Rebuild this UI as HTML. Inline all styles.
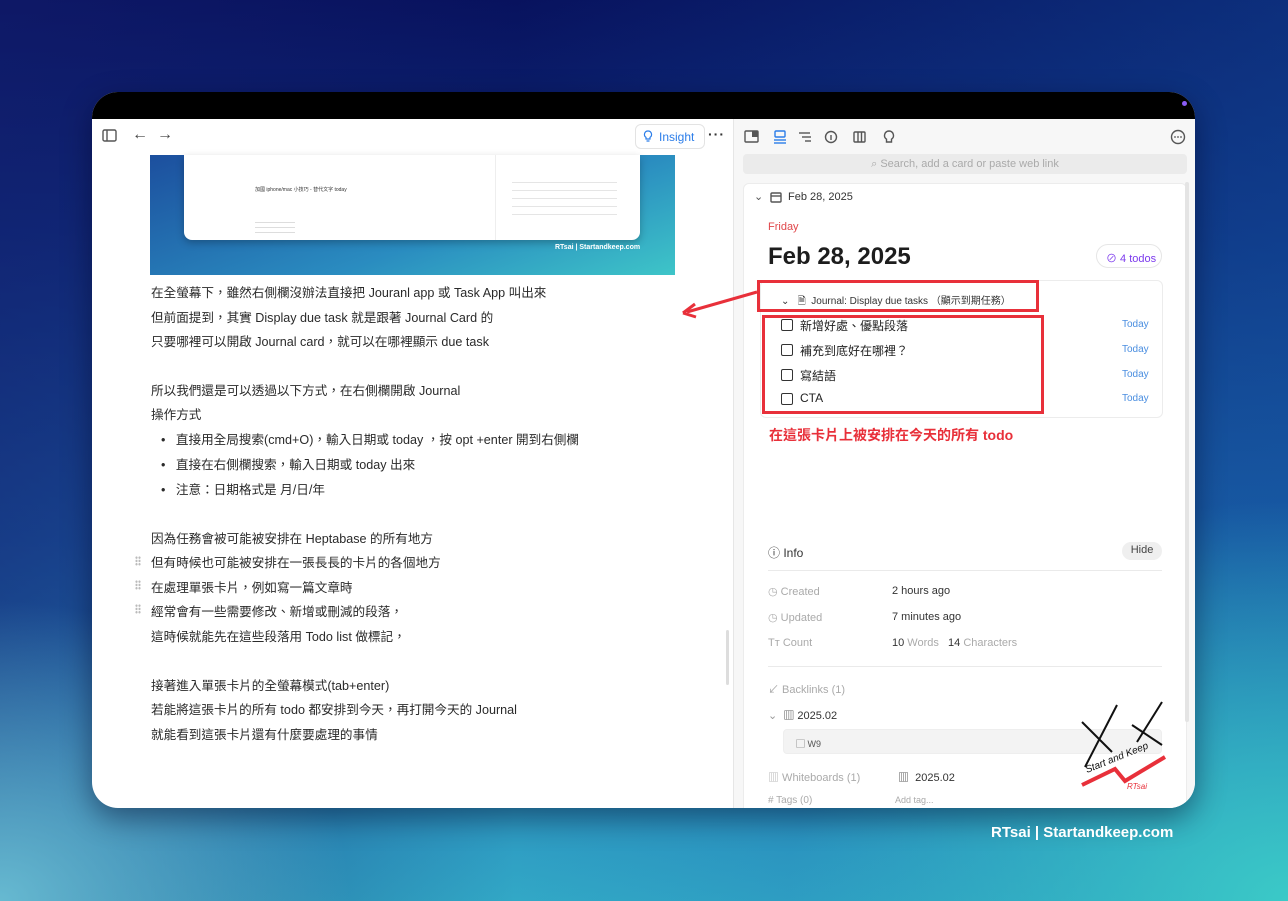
<!DOCTYPE html>
<html><head><meta charset="utf-8">
<style>
*{margin:0;padding:0;box-sizing:border-box}
body{width:1288px;height:901px;overflow:hidden;position:relative;font-family:"Liberation Sans","Noto Sans CJK TC",sans-serif;
background:
radial-gradient(ellipse 350px 300px at 0px 901px,rgba(110,195,215,.9) 0%,rgba(110,195,215,0) 100%),
radial-gradient(ellipse 500px 400px at 1288px 901px,rgba(60,205,200,.95) 0%,rgba(60,205,200,0) 100%),
linear-gradient(90deg,rgba(20,30,110,.5),rgba(0,10,90,0) 40%,rgba(20,90,170,.4) 100%),
linear-gradient(180deg,#08125e 0%,#0d2a78 25%,#1a5aa0 60%,#2a8fbf 85%,#32a8c6 100%);}
.a{position:absolute}
.win{left:92px;top:92px;width:1103px;height:716px;border-radius:26px;overflow:hidden;background:#fff;box-shadow:0 10px 30px rgba(0,0,30,.45)}
.tb{left:0;top:0;width:1103px;height:27px;background:#000}
.lt{font-size:12.6px;color:#2a2a2a;left:59px;white-space:nowrap}
.rt{white-space:nowrap}
.ic{stroke:#555;fill:none;stroke-width:1.4}
.grip{left:43px;width:6px;height:10px;background:radial-gradient(circle,#bbb 1px,transparent 1.3px) 0 0/3px 3.3px}
.cb{width:12px;height:12px;border:1.5px solid #333;border-radius:2px}
.today{font-size:10px;color:#4a8ee0}
.lbl{font-size:11px;color:#aaa}
.val{font-size:11px;color:#333}
</style></head><body>
<div class="a win">
 <div class="a tb"></div>
 <div class="a" style="right:8px;top:9px;width:5px;height:5px;border-radius:50%;background:#8b5cf6"></div>
 <svg class="a" style="left:10px;top:37px" width="16" height="14"><rect class="ic" x="1" y="1" width="13" height="11" rx="1.5"/><line class="ic" x1="5" y1="1" x2="5" y2="12"/></svg>
 <div class="a" style="left:40px;top:34px;font-size:16px;color:#444">←</div>
 <div class="a" style="left:65px;top:34px;font-size:16px;color:#444">→</div>
 <div class="a" style="left:543px;top:32px;width:70px;height:25px;border:1px solid #e3e3e3;border-radius:6px;font-size:12px;color:#2b7de9;padding:5px 0 0 23px">Insight</div>
 <svg class="a" style="left:551px;top:38px" width="10" height="13"><path d="M5 1a3.5 3.5 0 0 0-2 6.4V9h4V7.4A3.5 3.5 0 0 0 5 1zM3.5 11h3" stroke="#2b7de9" fill="none" stroke-width="1.2"/></svg>
 <div class="a" style="left:616px;top:34px;font-size:14px;color:#333;letter-spacing:1px;font-weight:bold">···</div>
 <div class="a" style="left:58px;top:63px;width:525px;height:120px;background:linear-gradient(160deg,#1c4f9e,#2a8cc0 60%,#3ec5c8)"></div>
 <div class="a" style="left:92px;top:63px;width:456px;height:85px;background:#fff;border-radius:0 0 8px 8px;box-shadow:0 3px 8px rgba(0,0,0,.25)"></div>
 <div class="a" style="left:403px;top:63px;width:1px;height:85px;background:#eee"></div>
 <div class="a" style="left:163px;top:94px;font-size:5px;color:#333">加國 iphone/mac 小技巧 - 替代文字 today</div>
 <div class="a" style="left:163px;top:130px;width:40px;height:12px;background:linear-gradient(#ddd 1px,transparent 1px) 0 0/100% 5px"></div>
 <div class="a" style="left:420px;top:90px;width:105px;height:40px;background:linear-gradient(#e5e5e5 1px,transparent 1px) 0 0/100% 8px"></div>
 <div class="a" style="left:463px;top:152px;font-size:7px;color:#fff;font-weight:bold">RTsai | Startandkeep.com</div>
 <div class="a lt" style="top:190px">在全螢幕下，雖然右側欄沒辦法直接把 Jouranl app 或 Task App 叫出來</div>
 <div class="a lt" style="top:215px">但前面提到，其實 Display due task 就是跟著 Journal Card 的</div>
 <div class="a lt" style="top:239px">只要哪裡可以開啟 Journal card，就可以在哪裡顯示 due task</div>
 <div class="a lt" style="top:288px">所以我們還是可以透過以下方式，在右側欄開啟 Journal</div>
 <div class="a lt" style="top:312px">操作方式</div>
 <div class="a lt" style="top:337px;left:69px">•&nbsp;&nbsp;&nbsp;直接用全局搜索(cmd+O)，輸入日期或 today ，按 opt +enter 開到右側欄</div>
 <div class="a lt" style="top:362px;left:69px">•&nbsp;&nbsp;&nbsp;直接在右側欄搜索，輸入日期或 today 出來</div>
 <div class="a lt" style="top:387px;left:69px">•&nbsp;&nbsp;&nbsp;注意：日期格式是 月/日/年</div>
 <div class="a lt" style="top:436px">因為任務會被可能被安排在 Heptabase 的所有地方</div>
 <div class="a lt" style="top:460px">但有時候也可能被安排在一張長長的卡片的各個地方</div>
 <div class="a lt" style="top:485px">在處理單張卡片，例如寫一篇文章時</div>
 <div class="a lt" style="top:509px">經常會有一些需要修改、新增或刪減的段落，</div>
 <div class="a lt" style="top:534px">這時候就能先在這些段落用 Todo list 做標記，</div>
 <div class="a lt" style="top:583px">接著進入單張卡片的全螢幕模式(tab+enter)</div>
 <div class="a lt" style="top:607px">若能將這張卡片的所有 todo 都安排到今天，再打開今天的 Journal</div>
 <div class="a lt" style="top:632px">就能看到這張卡片還有什麼要處理的事情</div>
 <div class="a grip" style="top:464px"></div><div class="a grip" style="top:488px"></div><div class="a grip" style="top:512px"></div>
 <div class="a" style="left:634px;top:538px;width:3px;height:55px;background:#ddd;border-radius:2px"></div>
 <div class="a" style="left:641px;top:27px;width:462px;height:689px;background:#f7f7f7;border-left:1px solid #e6e6e6"></div>
 <svg class="a" style="left:652px;top:37px" width="200" height="16">
  <rect class="ic" x="1" y="2" width="13" height="11" rx="1"/><rect x="8" y="2" width="6" height="6" fill="#555"/>
  <g stroke="#2b7de9" fill="none" stroke-width="1.4"><rect x="31" y="2" width="10" height="6" rx="1"/><line x1="30" y1="11" x2="42" y2="11"/><line x1="30" y1="14" x2="42" y2="14"/></g>
  <g class="ic"><line x1="55" y1="4" x2="66" y2="4"/><line x1="58" y1="8" x2="67" y2="8"/><line x1="61" y1="12" x2="67" y2="12"/></g>
  <circle class="ic" cx="87" cy="8" r="5.5"/><line class="ic" x1="87" y1="6" x2="87" y2="11"/>
  <rect class="ic" x="110" y="3" width="11" height="10" rx="1"/><line class="ic" x1="114" y1="3" x2="114" y2="13"/><line class="ic" x1="117.5" y1="3" x2="117.5" y2="13"/>
  <path class="ic" d="M145 2a4.5 4.5 0 0 0-2.5 8.2V13h5v-2.8A4.5 4.5 0 0 0 145 2z"/>
 </svg>
 <svg class="a" style="left:1078px;top:37px" width="16" height="16"><circle class="ic" cx="8" cy="8" r="6.5"/><circle cx="5" cy="8" r=".9" fill="#555"/><circle cx="8" cy="8" r=".9" fill="#555"/><circle cx="11" cy="8" r=".9" fill="#555"/></svg>
 <div class="a rt" style="left:651px;top:62px;width:444px;height:20px;background:#ebebeb;border-radius:4px;font-size:11px;color:#aaa;text-align:center;padding-top:4px">⌕ Search, add a card or paste web link</div>
 <div class="a" style="left:651px;top:91px;width:444px;height:640px;background:#fff;border:1px solid #ececec;border-radius:6px"></div>
 <div class="a rt" style="left:662px;top:98px;font-size:11px;color:#555">⌄</div>
 <svg class="a" style="left:678px;top:99px" width="12" height="12"><rect class="ic" x="1" y="2" width="10" height="9" rx="1"/><line class="ic" x1="1" y1="5" x2="11" y2="5"/></svg>
 <div class="a rt" style="left:696px;top:99px;font-size:11px;color:#333">Feb 28, 2025</div>
 <div class="a rt" style="left:676px;top:129px;font-size:11px;color:#e0464a">Friday</div>
 <div class="a rt" style="left:676px;top:151px;font-size:24px;font-weight:bold;color:#1d1d1d">Feb 28, 2025</div>
 <div class="a rt" style="left:1004px;top:152px;width:66px;height:24px;border:1px solid #e6e6e6;border-radius:12px;font-size:11px;color:#7c3aed;padding:5px 0 0 9px">⊘ 4 todos</div>
 <div class="a" style="left:668px;top:188px;width:403px;height:138px;border:1px solid #ececec;border-radius:6px"></div>
 <div class="a rt" style="left:689px;top:200px;font-size:10px;color:#333">⌄&nbsp;&nbsp;&nbsp;🗎&nbsp; Journal: Display due tasks （顯示到期任務）</div>
 <div class="a cb" style="left:689px;top:227px"></div><div class="a rt" style="left:708px;top:225px;font-size:12px;color:#222">新增好處、優點段落</div><div class="a today" style="left:1030px;top:227px">Today</div>
 <div class="a cb" style="left:689px;top:252px"></div><div class="a rt" style="left:708px;top:250px;font-size:12px;color:#222">補充到底好在哪裡？</div><div class="a today" style="left:1030px;top:252px">Today</div>
 <div class="a cb" style="left:689px;top:277px"></div><div class="a rt" style="left:708px;top:275px;font-size:12px;color:#222">寫結語</div><div class="a today" style="left:1030px;top:277px">Today</div>
 <div class="a cb" style="left:689px;top:301px"></div><div class="a rt" style="left:708px;top:299px;font-size:12px;color:#222">CTA</div><div class="a today" style="left:1030px;top:301px">Today</div>
 <div class="a" style="left:665px;top:188px;width:282px;height:32px;border:3px solid #e8303a"></div>
 <div class="a" style="left:670px;top:223px;width:282px;height:99px;border:3px solid #e8303a"></div>
 <div class="a rt" style="left:677px;top:333px;font-size:14px;font-weight:bold;color:#e8303a">在這張卡片上被安排在今天的所有 todo</div>
 <svg class="a" style="left:585px;top:190px" width="90" height="40"><line x1="80" y1="10" x2="10" y2="30" stroke="#e8303a" stroke-width="3"/><path d="M6 31 L18 22 M6 31 L19 35" stroke="#e8303a" stroke-width="3" fill="none"/></svg>
 <div class="a rt" style="left:676px;top:452px;font-size:12px;color:#333">ⓘ Info</div>
 <div class="a rt" style="left:1030px;top:450px;width:40px;height:18px;background:#efefef;border-radius:9px;font-size:11px;color:#444;text-align:center;padding-top:2px">Hide</div>
 <div class="a" style="left:676px;top:478px;width:394px;height:1px;background:#eaeaea"></div>
 <div class="a lbl" style="left:676px;top:493px">◷ Created</div><div class="a val" style="left:800px;top:493px">2 hours ago</div>
 <div class="a lbl" style="left:676px;top:519px">◷ Updated</div><div class="a val" style="left:800px;top:519px">7 minutes ago</div>
 <div class="a lbl" style="left:676px;top:545px">Tт Count</div><div class="a val" style="left:800px;top:545px">10 <span style="color:#aaa">Words</span>&nbsp;&nbsp; 14 <span style="color:#aaa">Characters</span></div>
 <div class="a" style="left:676px;top:574px;width:394px;height:1px;background:#eaeaea"></div>
 <div class="a lbl" style="left:676px;top:589px">↙ Backlinks (1)</div>
 <div class="a val" style="left:676px;top:615px"><span style="color:#999">⌄</span>&nbsp; ▥ 2025.02</div>
 <div class="a" style="left:691px;top:637px;width:379px;height:25px;background:#f3f3f3;border-radius:4px;border:1px solid #eee"></div>
 <div class="a rt" style="left:704px;top:645px;font-size:9px;color:#555">▢ W9</div>
 <div class="a lbl" style="left:676px;top:677px">▥ Whiteboards (1)</div><div class="a val" style="left:806px;top:677px">▥&nbsp; 2025.02</div>
 <div class="a" style="left:676px;top:703px;font-size:10px;color:#aaa"># Tags (0)</div><div class="a" style="left:803px;top:703px;font-size:9px;color:#aaa">Add tag...</div>
 <div class="a" style="left:1093px;top:90px;width:4px;height:540px;background:#e4e4e4;border-radius:2px"></div>
 <svg class="a" style="left:985px;top:605px" width="95" height="100"><g stroke="#111" stroke-width="2" fill="none"><path d="M5 25 L35 55 M40 8 L8 70"/><path d="M55 28 L85 48 M85 5 L60 45"/></g><path d="M5 88 L38 72 L48 84 L88 60" stroke="#e8303a" stroke-width="4" fill="none"/><text x="10" y="76" font-size="10" font-style="italic" fill="#111" transform="rotate(-22 10 76)">Start and Keep</text><text x="50" y="92" font-size="8" font-style="italic" fill="#e8303a">RTsai</text></svg>
</div>
<div class="a" style="left:991px;top:824px;font-size:15px;font-weight:bold;color:#fff">RTsai | Startandkeep.com</div>
</body></html>
